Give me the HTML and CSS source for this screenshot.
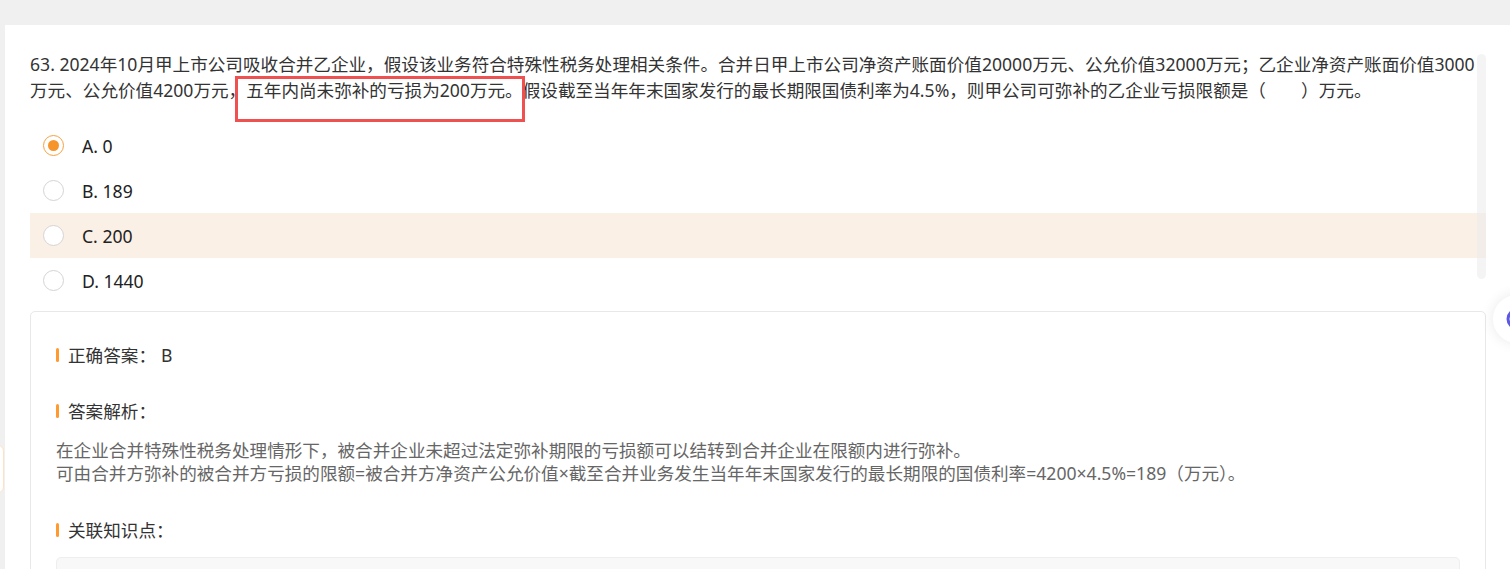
FILE: index.html
```html
<!DOCTYPE html>
<html lang="zh-CN">
<head>
    <meta charset="UTF-8">
    <meta name="viewport" content="width=device-width, initial-scale=1.0">
    <title>题目解析</title>
    <link rel="stylesheet" href="styles.css">
</head>
<body>
    <div class="page">
        <div class="panel">
            <div class="question">
                <div class="stem">
                    63. 2024年10月甲上市公司吸收合并乙企业，假设该业务符合特殊性税务处理相关条件。合并日甲上市公司净资产账面价值20000万元、公允价值32000万元；乙企业净资产账面价值3000万元、公允价值4200万元，<span class="mark">五年内尚未弥补的亏损为200万元。</span>假设截至当年年末国家发行的最长期限国债利率为4.5%，则甲公司可弥补的乙企业亏损限额是（　　）万元。
                </div>
                <ul class="options">
                    <li class="option"><span class="radio checked"></span><span class="label">A. 0</span></li>
                    <li class="option"><span class="radio"></span><span class="label">B. 189</span></li>
                    <li class="option hover"><span class="radio"></span><span class="label">C. 200</span></li>
                    <li class="option"><span class="radio"></span><span class="label">D. 1440</span></li>
                </ul>
                <div class="scroll-track"></div>
            </div>

            <div class="answer-box">
                <div class="section-title">正确答案：<span class="right-answer">B</span></div>
                <div class="section-title">答案解析：</div>
                <div class="analysis">
                    <p>在企业合并特殊性税务处理情形下，被合并企业未超过法定弥补期限的亏损额可以结转到合并企业在限额内进行弥补。</p>
                    <p>可由合并方弥补的被合并方亏损的限额=被合并方净资产公允价值×截至合并业务发生当年年末国家发行的最长期限的国债利率=4200×4.5%=189（万元）。</p>
                </div>
                <div class="section-title">关联知识点：</div>
                <div class="knowledge"></div>
            </div>
        </div>
    </div>

    <div class="side-tab"></div>
    <div class="float-btn">
        <svg width="22" height="22" viewBox="0 0 22 22"><circle cx="11" cy="11" r="9" fill="none" stroke="#5b57e8" stroke-width="3"/></svg>
    </div>
</body>
</html>
```

FILE: styles.css
```css
body {
    margin: 0;
    background-color: #f0f0f0;
    font-family: "Noto Sans", "Noto Sans CJK SC", sans-serif;
    font-size: 17.6px;
    color: #333;
    overflow: hidden;
}
.page {
    padding: 25px 0 0 5px;
}
.panel {
    background-color: white;
    padding: 26px 24px 40px 25px;
    min-height: 600px;
}
.question {
    position: relative;
}
.stem {
    line-height: 26px;
}
.mark {
    position: relative;
}
.mark::after {
    content: "";
    position: absolute;
    left: -11px;
    right: -2px;
    top: -2px;
    height: 46px;
    border: 3px solid #ef5151;
    box-sizing: border-box;
}
.options {
    list-style: none;
    margin: 20px 0 0;
    padding: 0;
}
.option {
    display: flex;
    align-items: center;
    height: 45px;
    padding-left: 13px;
}
.option.hover {
    background-color: #fbf0e6;
}
.radio {
    width: 21px;
    height: 21px;
    border: 1px solid #d4d4d4;
    border-radius: 50%;
    box-sizing: border-box;
    background-color: white;
    margin-right: 18px;
    display: flex;
    align-items: center;
    justify-content: center;
}
.radio.checked {
    border-color: #f7a040;
}
.radio.checked::after {
    content: "";
    width: 11px;
    height: 11px;
    border-radius: 50%;
    background-color: #f7952d;
}
.label {
    color: #222;
}
.scroll-track {
    position: absolute;
    right: 0;
    top: 3px;
    bottom: 24px;
    width: 9px;
    border-radius: 5px;
    background-color: rgba(235, 235, 235, 0.55);
}
.answer-box {
    margin-top: 8px;
    border: 1px solid #e8e8e8;
    border-radius: 5px;
    padding: 32px 25px 20px 25px;
}
.section-title {
    display: flex;
    align-items: center;
    line-height: 22px;
    color: #333;
    margin-bottom: 34px;
}
.section-title::before {
    content: "";
    width: 3px;
    height: 14px;
    border-radius: 2px;
    background-color: #ff9a2e;
    margin-right: 9px;
}
.right-answer {
    margin-left: 5px;
}
.analysis {
    margin-top: -17px;
    margin-bottom: 34px;
    line-height: 23px;
    color: #666;
}
.analysis p {
    margin: 0;
}
.knowledge {
    margin-top: -18px;
    height: 60px;
    background-color: #f8f8f8;
    border: 1px solid #eeeeee;
    border-radius: 5px;
}
.side-tab {
    position: fixed;
    left: -40px;
    top: 445px;
    width: 44px;
    height: 48px;
    background-color: white;
    border: 1px solid #fde2c6;
    border-radius: 6px;
    box-sizing: border-box;
}
.float-btn {
    position: fixed;
    left: 1493px;
    top: 295px;
    width: 48px;
    height: 48px;
    border-radius: 50%;
    background-color: white;
    box-shadow: 0 0 14px rgba(0, 0, 0, 0.09);
    display: flex;
    align-items: center;
    justify-content: center;
}
```
